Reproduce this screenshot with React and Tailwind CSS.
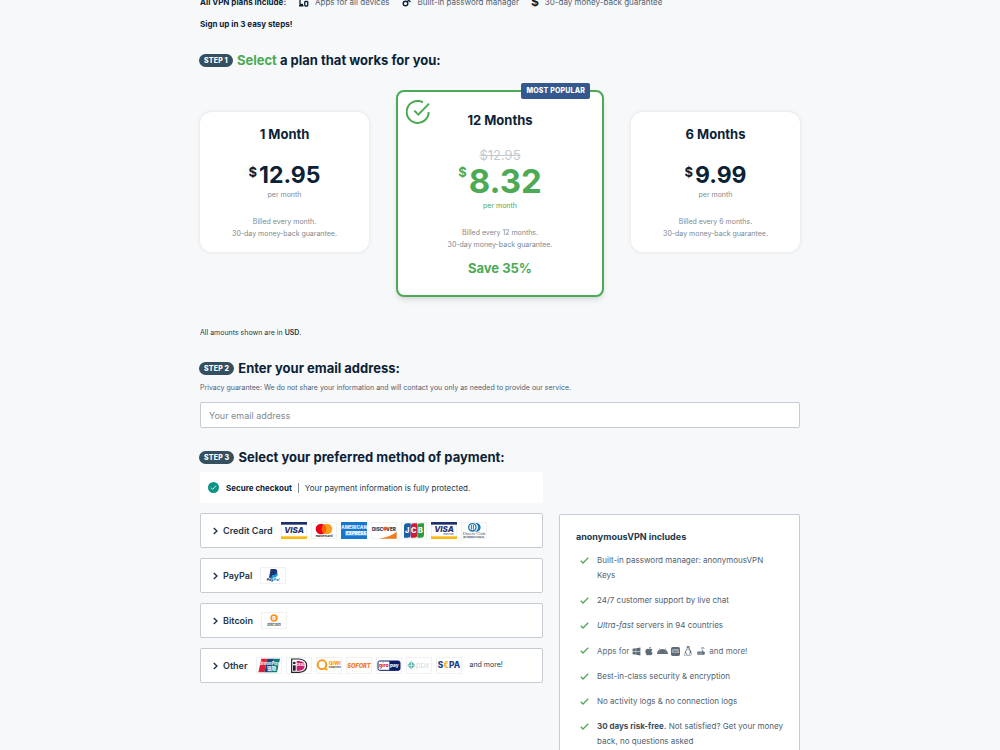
import { useState } from "react";
import { FaWindows, FaApple, FaAndroid } from "react-icons/fa6";
import { MdRouter } from "react-icons/md";
import { VscTerminalLinux } from "react-icons/vsc";

const plans = [
  { id: "1", title: "1 Month", price: "12.95", billed: "Billed every month." },
  { id: "12", title: "12 Months", price: "8.32", old: "$12.95", billed: "Billed every 12 months.", save: "Save 35%" },
  { id: "6", title: "6 Months", price: "9.99", billed: "Billed every 6 months." },
];

/* ICONS */

const DevicesIcon = () => (
  <svg viewBox="0 0 20 20" className="h-[10px] w-[11px]" fill="none" stroke="#0b2236" strokeWidth="2.6">
    <path d="M9 15H2M3 14V3h14v3M1 17.500h9" />
    <rect x="12.500" y="9" width="6" height="9" rx="1.500" />
  </svg>
);

const KeyIcon = () => (
  <svg viewBox="0 0 20 20" className="h-[10px] w-[10px]" fill="none" stroke="#0b2236" strokeWidth="2.8">
    <circle cx="7" cy="13" r="4.600" />
    <path d="M10.500 9.500L18 2M13.500 6.500l3.500 3.500" />
  </svg>
);

const Check = () => (
  <svg viewBox="0 0 18 14" className="mt-1 h-[7px] w-[9px] shrink-0" fill="none" stroke="#4caa55" strokeWidth="2.600">
    <path d="M1.500 7.500L6 12L16.500 1.500" />
  </svg>
);

const Chevron = () => (
  <svg viewBox="0 0 10 16" className="h-2 w-[5px]" fill="none" stroke="#22384a" strokeWidth="3">
    <path d="M1.500 2L8 8L1.500 14" />
  </svg>
);

const IosIcon = () => (
  <svg viewBox="0 0 27 27" className="h-[9px] w-[9px]">
    <rect width="27" height="27" rx="5" fill="#5c6b78" />
    <text x="13.500" y="18" textAnchor="middle" fontSize="13" fill="#fff">iOS</text>
  </svg>
);

/* PAYMENT LOGOS */

function Logo({ label, children }){
  return (
    <svg viewBox="0 0 78 51" role="img" aria-label={label} className="h-[17px] w-[26px] shrink-0 font-['Inter',sans-serif]">
      <rect x="1.500" y="1.500" width="75" height="48" fill="#fff" stroke="#f0f1f3" strokeWidth="3" />
      {children}
    </svg>
  );
}

const Visa = ({ sub }) => (
  <Logo label="Visa">
    <rect width="78" height="8" fill="#1f2f6e" />
    <rect y="43" width="78" height="8" fill="#fbb90e" />
    <text x="39" y={sub ? 31 : 34} textAnchor="middle" fontSize="24" fontWeight="800" fontStyle="italic" fill="#1f2f6e">VISA</text>
    {sub && <text x="53" y="39" textAnchor="middle" fontSize="8" fill="#1f2f6e">Electron</text>}
  </Logo>
);

const Mastercard = () => (
  <Logo label="Mastercard">
    <circle cx="30" cy="21" r="16" fill="#eb001b" />
    <circle cx="48" cy="21" r="16" fill="#f79e1b" />
    <path d="M39 7.800a16 16 0 0 1 0 26.400a16 16 0 0 1 0-26.400z" fill="#ff5f00" />
    <text x="39" y="45" textAnchor="middle" fontSize="9" fontWeight="700" fill="#222">mastercard</text>
  </Logo>
);

const Amex = () => (
  <Logo label="American Express">
    <rect width="78" height="51" fill="#1577cf" />
    <text x="39" y="22" textAnchor="middle" fontSize="14" fontWeight="900" fill="#d5eaff">AMERICAN</text>
    <rect x="12" y="27" width="66" height="14" fill="#5ba6e6" />
    <text x="45" y="39" textAnchor="middle" fontSize="13" fontWeight="900" fill="#fff">EXPRESS</text>
  </Logo>
);

const Discover = () => (
  <Logo label="Discover">
    <path d="M24 50Q60 44 77 29V50z" fill="#f27a21" />
    <text x="3" y="26" fontSize="14" fontWeight="800" fill="#333">DISC</text>
    <circle cx="42" cy="20" r="6" fill="#f05a28" />
    <text x="46" y="26" fontSize="14" fontWeight="800" fill="#333">VER</text>
  </Logo>
);

const Jcb = () => (
  <Logo label="JCB">
    <path d="M18 4H29V38Q29 47 20 47H9V13Q9 4 18 4z" fill="#1560a8" />
    <path d="M38 4H49V38Q49 47 40 47H29V13Q29 4 38 4z" fill="#cf1b3b" />
    <path d="M58 4H69V38Q69 47 60 47H49V13Q49 4 58 4z" fill="#27a03c" />
    <text x="39" y="33" textAnchor="middle" fontSize="22" fontWeight="800" fill="#fff">J C B</text>
  </Logo>
);

const Diners = () => (
  <Logo label="Diners Club International">
    <circle cx="34" cy="16" r="11" fill="none" stroke="#1b75b0" strokeWidth="4" />
    <path d="M38 3a13 13 0 0 1 0 26h8a13 13 0 0 0 0-26z" fill="#1b75b0" />
    <path d="M31 9v14M37 9v14" stroke="#1b75b0" strokeWidth="3" />
    <text x="39" y="40" textAnchor="middle" fontSize="14" fill="#47525c" className="font-['Liberation_Serif',serif]">Diners Club</text>
    <text x="39" y="48" textAnchor="middle" fontSize="8" fontWeight="700" fill="#47525c">INTERNATIONAL</text>
  </Logo>
);

const PayPal = () => (
  <Logo label="PayPal">
    <path d="M36 14h13q7 4 3 12q-3 6-12 6l-2 3h-8z" fill="#1f9ad6" />
    <path d="M32 6h13q9 2 6 11q-3 7-12 7h-3l-2 8h-7z" fill="#1d3577" />
    <text x="20" y="43" fontSize="11" fontWeight="800" fontStyle="italic" fill="#1d3577">Pay<tspan fill="#1f9ad6">Pal</tspan></text>
  </Logo>
);

const Bitcoin = () => (
  <Logo label="Bitcoin">
    <circle cx="39" cy="18" r="11" fill="#f7931a" />
    <text x="39" y="24" textAnchor="middle" fontSize="16" fontWeight="800" fill="#fff">B</text>
    <text x="39" y="43" textAnchor="middle" fontSize="12" fontWeight="700" fontStyle="italic" fill="#4d4d4d">bitcoin</text>
  </Logo>
);

const UnionPay = () => (
  <Logo label="UnionPay">
    <path d="M16 5h18l-9 41H7z" fill="#dc2038" />
    <path d="M34 5h20l-9 41H25z" fill="#13477f" />
    <path d="M54 5h18l-9 41H45z" fill="#087a80" />
    <text x="40" y="24" textAnchor="middle" fontSize="13" fontWeight="700" fontStyle="italic" fill="#fff">UnionPay</text>
    <text x="47" y="39" textAnchor="middle" fontSize="14" fontWeight="700" fill="#fff" className="font-['Noto_Sans_CJK_SC',sans-serif]">银联</text>
  </Logo>
);

const Ideal = () => (
  <Logo label="iDEAL">
    <path d="M17 6h22q23 2 23 20t-23 20H17z" fill="#fff" stroke="#222" strokeWidth="3.500" />
    <circle cx="25" cy="18" r="4" fill="#222" />
    <path d="M21 25h8v16h-8z" fill="#222" />
    <path d="M32 12h7q17 1 17 14t-17 15h-7z" fill="#cc1f72" />
    <text x="44" y="26" textAnchor="middle" fontSize="10" fontWeight="700" fill="#fff">DEAL</text>
  </Logo>
);

const Qiwi = () => (
  <Logo label="QIWI Кошелек">
    <circle cx="18" cy="23" r="13" fill="none" stroke="#fb9818" strokeWidth="6" />
    <path d="M26 34l8 5" stroke="#fb9818" strokeWidth="5" />
    <text x="38" y="25" fontSize="15" fontWeight="800" fill="#fb9818">QIWI</text>
    <text x="38" y="34" fontSize="8" fontWeight="700" fill="#444">Кошелек</text>
  </Logo>
);

const Sofort = () => (
  <Logo label="Sofort">
    <text x="39" y="32" textAnchor="middle" fontSize="17" fontWeight="900" fontStyle="italic" fill="#ee7f1f">SOFORT</text>
  </Logo>
);

const Giropay = () => (
  <Logo label="giropay">
    <rect x="6" y="12" width="66" height="28" rx="5" fill="#fff" stroke="#0b1b68" strokeWidth="3" />
    <path d="M40 12h27q5 0 5 5v18q0 5-5 5H40z" fill="#0b1b68" />
    <text x="9" y="31" fontSize="15" fontWeight="800" fill="#d81e3a">giro</text>
    <text x="42" y="31" fontSize="14" fontWeight="800" fill="#fff">pay</text>
  </Logo>
);

const Pbx = () => (
  <Logo label="pbx">
    <path d="M16 13l12 12l-12 12l-12-12z" fill="#4fb3a8" />
    <path d="M16 14v22M5 25h22" stroke="#fff" strokeWidth="2" />
    <text x="29" y="32" fontSize="24" fontWeight="200" fill="#b9c4cd">pbx</text>
  </Logo>
);

const Sepa = () => (
  <Logo label="SEPA">
    <text x="39" y="34" textAnchor="middle" fontSize="25" fontWeight="800" fill="#1a3c8e">S<tspan fill="#fbb420">€</tspan>PA</text>
  </Logo>
);

const methods = [
  { name: "Credit Card", logos: [<Visa key="v" />, <Mastercard key="m" />, <Amex key="a" />, <Discover key="d" />, <Jcb key="j" />, <Visa key="e" sub />, <Diners key="c" />] },
  { name: "PayPal", logos: [<PayPal key="p" />] },
  { name: "Bitcoin", logos: [<Bitcoin key="b" />] },
  {
    name: "Other",
    logos: [<UnionPay key="u" />, <Ideal key="i" />, <Qiwi key="q" />, <Sofort key="s" />, <Giropay key="g" />, <Pbx key="p" />, <Sepa key="e" />],
    more: true,
  },
];

function StepHeading({ step, children }){
  return (
    <h2 className="flex h-4 items-center gap-1 text-[13px] leading-4 font-bold text-[#0b2236]">
      <span className="-ml-px rounded-full bg-[#344f5f] px-[5px] text-[7px] leading-[13px] font-extrabold tracking-wide text-white">
        STEP {step}
      </span>
      <span>{children}</span>
    </h2>
  );
}

function PlanCard({ plan, selected, onSelect }){
  const best = Boolean(plan.save);
  return (
    <label
      className={
        best
          ? "relative block w-[208px] cursor-pointer rounded-lg border-2 border-[#4caa55] bg-white pt-5 pb-[19px] text-center shadow-md"
          : "relative block w-[169px] cursor-pointer rounded-xl bg-white pt-[14px] pb-3 text-center shadow-[0_0_4px_rgba(0,0,0,0.1)]"
      }
    >
      <input type="radio" name="plan" value={plan.id} checked={selected} onChange={onSelect} className="sr-only" />

      {best && (
        <span className="absolute -top-[9px] right-3 rounded-[2px] bg-[#35588f] px-[5px] text-[7px] leading-4 font-extrabold tracking-wide text-white">
          MOST POPULAR
        </span>
      )}
      {selected && (
        <svg viewBox="0 0 72 72" className="absolute top-2 left-2 h-6 w-6" fill="none" stroke="#4caa55" strokeWidth="6">
          <path d="M51 7A33 33 0 1 0 68 36" />
          <path d="M25 32L37 44L69 11" />
        </svg>
      )}

      <span className="block text-[13px] leading-4 font-bold text-[#0b2236]">{plan.title}</span>

      {plan.old && <s className="mt-5 block text-[13px] leading-[14px] text-[#c3cace]">{plan.old}</s>}

      <span
        className={
          best
            ? "mt-px flex items-start justify-center gap-[2px] text-[33px] leading-9 font-bold text-[#4caa55]"
            : "mt-[21px] flex items-start justify-center gap-[2px] text-[23px] leading-6 font-bold text-[#0b2236]"
        }
      >
        <span className="text-[13px] leading-[18px]">$</span>
        {plan.price}
      </span>

      <span className={best ? "mt-px block text-[7px] leading-3 text-[#4caa55]" : "mt-[2px] block text-[7px] leading-3 text-[#7d8990]"}>
        per month
      </span>

      <span className="mt-[15px] block text-[7px] leading-3 text-[#7d8990]">
        {plan.billed}
        <br />
        30-day money-back guarantee.
      </span>

      {plan.save && <span className="mt-[9px] block text-[13px] leading-4 font-bold text-[#4caa55]">{plan.save}</span>}
    </label>
  );
}

function Feature({ children }){
  return (
    <li className="flex gap-2">
      <Check />
      <span>{children}</span>
    </li>
  );
}

export default function App(){

  const [plan, setPlan] = useState("12");
  const [open, setOpen] = useState(null);

  return (

    <div className="h-screen overflow-hidden bg-[#f7f8fa] font-['Inter',sans-serif] text-[#22384a]">

      <main className="mx-auto -mt-1 max-w-[600px]">

        {/* INTRO */}

        <div className="flex h-3 items-center text-[8px] leading-3 text-[#4f6170]">
          <b className="mr-3 text-[#0b2236]">All VPN plans include:</b>
          <DevicesIcon />
          <span className="mr-3 ml-[6px]">Apps for all devices</span>
          <KeyIcon />
          <span className="mr-3 ml-[6px]">Built-in password manager</span>
          <b className="text-[12px] text-[#0b2236]">$</b>
          <span className="ml-[6px]">30-day money-back guarantee</span>
        </div>

        <p className="mt-[10px] mb-[22px] text-[8px] leading-3 font-bold text-[#0b2236]">Sign up in 3 easy steps!</p>

        {/* PLANS */}

        <StepHeading step={1}>
          <span className="text-[#4caa55]">Select</span> a plan that works for you:
        </StepHeading>

        <div className="mt-[22px] flex items-start justify-between">
          {plans.map(p => (
            <div key={p.id} className={p.save ? "" : "mt-[22px]"}>
              <PlanCard plan={p} selected={plan === p.id} onSelect={() => setPlan(p.id)} />
            </div>
          ))}
        </div>

        <p className="mt-[30px] mb-[21px] text-[7px] leading-3">
          All amounts shown are in <b className="font-semibold">USD</b>.
        </p>

        {/* EMAIL */}

        <StepHeading step={2}>
          <label htmlFor="email">Enter your email address:</label>
        </StepHeading>

        <p className="mt-[6px] text-[7px] leading-3 text-[#4f6170]">
          Privacy guarantee: We do not share your information and will contact you only as needed to provide our service.
        </p>

        <input
          id="email"
          type="email"
          placeholder="Your email address"
          className="mt-2 mb-[21px] block h-[26px] w-full rounded-[2px] border border-[#c6ccd2] bg-white px-2 text-[9px] placeholder:text-[#808a92]"
        />

        {/* PAYMENT */}

        <StepHeading step={3}>Select your preferred method of payment:</StepHeading>

        <div className="mt-[7px] flex items-start gap-4">

          <div className="flex flex-1 flex-col gap-[10px]">

            <div className="flex h-[31px] items-center rounded-[2px] bg-white px-2 text-[8px]">
              <svg viewBox="0 0 33 33" className="mr-[7px] h-[11px] w-[11px]" fill="none">
                <circle cx="16.500" cy="16.500" r="16.500" fill="#0b9485" />
                <path d="M9 17l5 5l10-11" stroke="#fff" strokeWidth="2.500" />
              </svg>
              <b className="text-[#0b2236]">Secure checkout</b>
              <span className="mx-[6px] h-[10px] w-px bg-[#7d8990]" />
              <span>Your payment information is fully protected.</span>
            </div>

            {methods.map(m => (
              <button
                key={m.name}
                type="button"
                aria-expanded={open === m.name}
                onClick={() => setOpen(open === m.name ? null : m.name)}
                className="flex h-[35px] items-center rounded-[2px] border border-[#c6ccd2] bg-white pl-3 text-left"
              >
                <Chevron />
                <span className="mr-2 ml-[5px] text-[9px] font-semibold">{m.name}</span>
                <span className="flex gap-1">{m.logos}</span>
                {m.more && <span className="ml-2 text-[7px]">and more!</span>}
              </button>
            ))}

          </div>

          <aside className="mt-[42px] w-[241px] rounded-[2px] border border-[#c6ccd2] bg-white px-4 pt-[14px] pb-5">

            <h3 className="mb-[9px] text-[9px] leading-[15px] font-bold">anonymousVPN includes</h3>

            <ul className="flex flex-col gap-[10px] pl-1 text-[8px] leading-[15px] text-[#4f6170]">
              <Feature>Built-in password manager: anonymousVPN Keys</Feature>
              <Feature>24/7 customer support by live chat</Feature>
              <Feature><em>Ultra-fast</em> servers in 94 countries</Feature>
              <Feature>
                <span className="flex h-4 items-center gap-[3px] text-[#5c6b78]">
                  Apps for
                  <FaWindows size={9} />
                  <FaApple size={10} />
                  <FaAndroid size={11} />
                  <IosIcon />
                  <VscTerminalLinux size={10} />
                  <MdRouter size={10} />
                  <span>and more!</span>
                </span>
              </Feature>
              <Feature>Best-in-class security &amp; encryption</Feature>
              <Feature>No activity logs &amp; no connection logs</Feature>
              <Feature>
                <b className="text-[#3b4d5b]">30 days risk-free.</b> Not satisfied? Get your money back, no questions asked
              </Feature>
            </ul>

          </aside>

        </div>

      </main>

    </div>

  );

}
